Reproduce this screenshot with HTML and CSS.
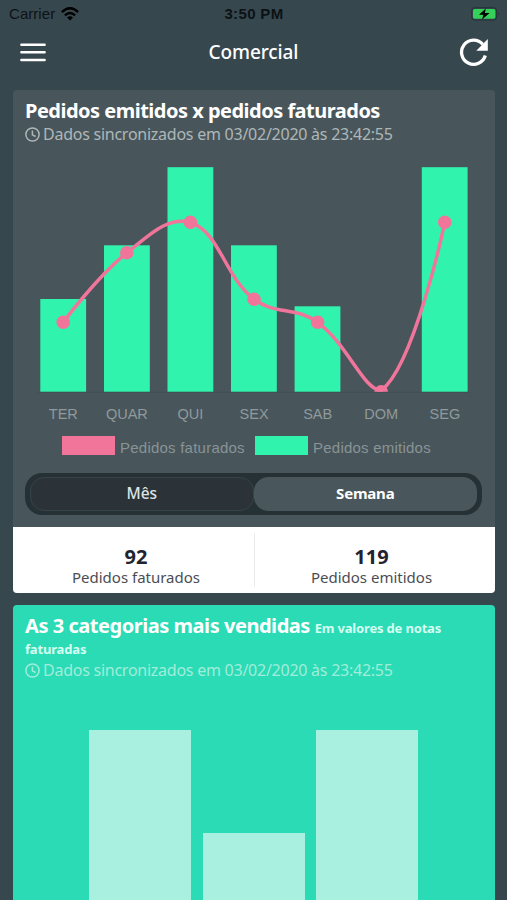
FILE: index.html
```html
<!DOCTYPE html>
<html lang="pt">
<head>
<meta charset="utf-8">
<title>Comercial</title>
<link rel="stylesheet" href="styles.css">
</head>
<body>
<div class="status">
  <div class="carrier">Carrier
    <svg width="18" height="14" viewBox="0 0 18 14"><g fill="none" stroke="#000"><path d="M.9 5.2Q9-2.6 17.1 5.2" stroke-width="2.5"/><path d="M3.9 8.3Q9 3.6 14.1 8.3" stroke-width="2.4"/></g><path d="M6 10.4Q9 8 12 10.4L9 13.5Z"/></svg>
  </div>
  <div class="clock">3:50 PM</div>
  <svg class="battery" width="30" height="14" viewBox="0 0 30 14"><rect x=".7" y=".7" width="25" height="12.3" rx="3" fill="none" stroke="#253238" stroke-width="1"/><rect x="2" y="2" width="22.4" height="9.7" rx="1.7" fill="#35d05a"/><path d="M27.2 5Q29 7 27.2 9Z" fill="#253238"/><path d="M14.8 1.5 8 7.7h4.4l-1.3 4.7 7.5-6.5h-4.7z" fill="#000"/></svg>
</div>
<header class="bar">
  <svg width="26" height="20" viewBox="0 0 26 20"><path d="M1.4 2.7h23.2M1.4 10.3h23.2M1.4 17.9h23.2" stroke="#fff" stroke-width="2.5" stroke-linecap="round"/></svg>
  <h1>Comercial</h1>
  <svg width="30" height="30" viewBox="0 0 30 30"><path d="M26.3 18.5A12.1 12.1 0 1 1 23.8 7.3" fill="none" stroke="#fff" stroke-width="3.3"/><path d="M28.8 2V13.8H17.3Z" fill="#fff"/></svg>
</header>

<main>
  <section class="card orders">
    <h2>Pedidos emitidos x pedidos faturados</h2>
    <p class="sync"><svg width="15" height="15" viewBox="0 0 15 15"><g fill="none" stroke="currentColor" stroke-width="1.5"><circle cx="7.5" cy="7.5" r="6.6"/><path d="M7.4 3.5v4.3l3.2 1.7"/></g></svg><span>Dados sincronizados em 03/02/2020 às 23:42:55</span></p>
    <svg class="chart" width="482" height="246" viewBox="13 150 482 246">
      <clipPath id="area"><rect x="30" y="150" width="455" height="241.7"/></clipPath>
      <path d="M38 392.3H470" stroke="#414e53" stroke-width="1"/>
      <g fill="#30f4ae">
        <rect x="40.3" y="299" width="45.8" height="92.7"/>
        <rect x="104" y="245.3" width="45.8" height="146.4"/>
        <rect x="167.5" y="167.2" width="45.8" height="224.5"/>
        <rect x="231" y="245.3" width="45.8" height="146.4"/>
        <rect x="294.6" y="306.3" width="45.8" height="85.4"/>
        <rect x="421.8" y="167.2" width="45.8" height="224.5"/>
      </g>
      <g clip-path="url(#area)" fill="#f1759b">
        <path d="M63.2 322.3C63.2 322.3 97.7 276 126.8 252.8C148.5 236 166 216.5 190.4 222.2C220 232.8 223.7 275.1 254 299.2C274.7 315.1 296.5 306.5 317.6 322.3C347.3 343.7 363.8 390.5 381.2 390.5C414.6 365.7 444.8 222.2 444.8 222.2" fill="none" stroke="#f1759b" stroke-width="3.5"/>
        <circle cx="63.2" cy="322.3" r="6.8"/><circle cx="126.8" cy="252.8" r="6.8"/><circle cx="190.4" cy="222.2" r="6.8"/><circle cx="254" cy="299.2" r="6.8"/><circle cx="317.6" cy="322.3" r="6.8"/><circle cx="381.2" cy="391.7" r="6.8"/><circle cx="444.8" cy="222.2" r="6.8"/>
      </g>
    </svg>
    <div class="days"><span>TER</span><span>QUAR</span><span>QUI</span><span>SEX</span><span>SAB</span><span>DOM</span><span>SEG</span></div>
    <div class="legend"><i class="pink"></i><span>Pedidos faturados</span><i></i><span>Pedidos emitidos</span></div>
    <div class="toggle"><button>Mês</button><button class="on">Semana</button></div>
    <div class="totals">
      <div><strong>92</strong><span>Pedidos faturados</span></div>
      <div><strong>119</strong><span>Pedidos emitidos</span></div>
    </div>
  </section>

  <section class="card categories">
    <h2>As 3 categorias mais vendidas <small>Em valores de notas faturadas</small></h2>
    <p class="sync"><svg width="15" height="15" viewBox="0 0 15 15"><g fill="none" stroke="currentColor" stroke-width="1.5"><circle cx="7.5" cy="7.5" r="6.6"/><path d="M7.4 3.5v4.3l3.2 1.7"/></g></svg><span>Dados sincronizados em 03/02/2020 às 23:42:55</span></p>
    <div class="columns"><i></i><i class="short"></i><i></i></div>
  </section>
</main>
</body>
</html>
```
FILE: styles.css
```css
* { box-sizing: border-box; }
body {
  margin: 0;
  height: 900px;
  overflow: hidden;
  background: #37474e;
  font-family: "Noto Sans", "Open Sans", sans-serif;
  color: #fff;
}
svg { display: block; flex: none; }
h1, h2, p { margin: 0; }

.status {
  display: grid;
  grid-template-columns: 1fr auto 1fr;
  align-items: center;
  height: 28px;
  padding: 0 6px 0 9px;
  font: 15px/28px "Liberation Sans", sans-serif;
  color: #0c1216;
}
.carrier { display: flex; gap: 6px; align-items: center; letter-spacing: .05px; }
.clock { font-weight: 700; letter-spacing: .35px; margin-left: -2px; }
.battery { justify-self: end; }

.bar {
  display: flex;
  justify-content: space-between;
  align-items: center;
  height: 48px;
  padding: 0 18px 0 20px;
}
.bar h1 { font-size: 19px; font-weight: 500; line-height: 24px; letter-spacing: -.1px; padding-left: 2px; }

main { display: flex; flex-direction: column; gap: 12px; padding: 14px 12px 0 13px; }
.card { flex: none; border-radius: 4px; overflow: hidden; }
.card h2 { padding-left: 12px; font-size: 20px; font-weight: 700; letter-spacing: -.51px; }
.sync {
  display: flex;
  align-items: center;
  gap: 3px;
  height: 20px;
  padding-left: 12px;
  font-size: 16px;
  line-height: 20px;
  letter-spacing: -.25px;
}
.orders { height: 503px; background: #48565b; }
.orders h2 { padding-top: 8px; height: 34px; line-height: 26px; }
.orders .sync { color: #afb6b8; }
.chart { margin-top: 6px; }

.days {
  display: grid;
  grid-template-columns: repeat(7, 63.6px);
  margin: 8px 0 0 18.5px;
  height: 20px;
  font: 14.5px/20px "Liberation Sans", sans-serif;
  color: #90999c;
  text-align: center;
}
.legend {
  display: flex;
  align-items: center;
  height: 20px;
  margin: 12px 0 0 49px;
  font: 15px/20px "Liberation Sans", sans-serif;
  letter-spacing: .23px;
  color: #899396;
}
.legend i { width: 53px; height: 18.4px; background: #30f4ae; margin: 0 5px 1px 0; }
.legend .pink { background: #f1759b; }
.legend span { padding-top: 3px; }
.legend .pink + span { width: 135px; }

.toggle {
  display: flex;
  width: 457px;
  height: 42px;
  margin: 17px 0 0 12px;
  padding: 4px 5px;
  border-radius: 17px;
  background: #263135;
}
.toggle button {
  flex: 1;
  padding: 0 0 2px;
  border: 1px solid #35434a;
  border-radius: 14px;
  background: #2b3338;
  color: #dfe3e4;
  font: 500 15.5px/30px "Noto Sans", sans-serif;
}
.toggle .on { padding-bottom: 4px; background: #49575c; border-color: #4a585d; color: #fff; font-weight: 700; font-size: 15px; letter-spacing: -.2px; }

.totals {
  display: grid;
  grid-template-columns: 241px 241px;
  height: 66px;
  margin-top: 12px;
  padding-top: 6px;
  background: #fff;
  text-align: center;
}
.totals div { display: flex; flex-direction: column; align-items: center; height: 54px; padding: 13px 0 0 5px; }
.totals div + div { border-left: 1px solid #e9ebed; padding-left: 0; padding-right: 7px; }
.totals strong { font-size: 20px; line-height: 22px; color: #23232f; }
.totals span { font-size: 15px; line-height: 19px; color: #4b4d54; }

.categories { height: 320px; background: #2adbb5; }
.categories h2 { padding-top: 10px; height: 55px; line-height: 21px; letter-spacing: -.46px; }
.categories small { font-size: 13px; line-height: 16px; letter-spacing: -.17px; color: #d6fff1; }
.categories .sync { color: #a1edda; }
.columns { display: flex; align-items: flex-end; gap: 11.3px; height: 195px; margin: 50px 0 0 76.3px; }
.columns i { width: 102.2px; height: 195px; background: #a9f0e0; }
.columns .short { height: 92.3px; }
```
